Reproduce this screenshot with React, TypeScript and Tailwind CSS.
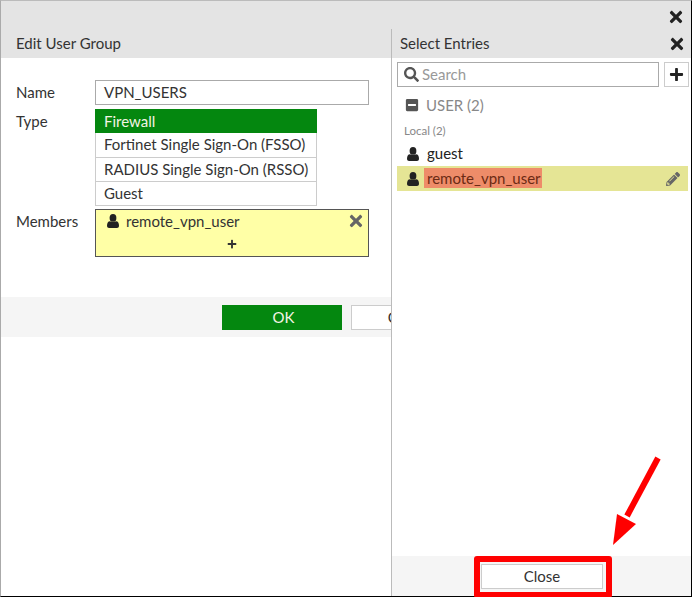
import React from 'react'
import { FaMinusSquare, FaPencilAlt, FaPlus, FaSearch, FaTimes } from 'react-icons/fa'

const typeOptions = ['Fortinet Single Sign-On (FSSO)', 'RADIUS Single Sign-On (RSSO)', 'Guest']

const UserIcon = ({ className }: { className?: string }) => (
  <svg className={className} width="12" height="14" viewBox="0 0 12 14" fill="currentColor">
    <ellipse cx="6" cy="3.9" rx="3.4" ry="3.9" />
    <path d="M0 11.8C0 9.2 1 7.2 3 7.2C4 8.2 8 8.2 9 7.2C11 7.2 12 9.2 12 11.8C12 13.2 11 14 10 14L2 14C1 14 0 13.2 0 11.8Z" />
  </svg>
)

const FormRow = ({ label, children }: { label: string; children: React.ReactNode }) => (
  <div className="flex">
    <div className="w-[79px] pt-[1px] text-[15px] leading-[22px] text-[#333]">{label}</div>
    {children}
  </div>
)

const EditUserGroup = () => {
  return (
    <div className="flex w-[390px] shrink-0 flex-col overflow-hidden">
      <div className="h-[29px] bg-[#e4e4e4] pl-[15px] text-[15px] leading-[28px] text-[#333]">Edit User Group</div>

      <div className="flex h-[239px] flex-col pl-[15px] pt-[22px]">
        <FormRow label="Name">
          <div className="h-[25px] w-[274px] border border-[#aaa] pl-[8px] text-[15px] leading-[23px] text-[#333]">VPN_USERS</div>
        </FormRow>

        <div className="mt-[4px]">
          <FormRow label="Type">
            <div className="flex w-[222px] flex-col">
              <div className="h-[24px] bg-[#04870f] pl-[9px] text-[15px] leading-[24px] text-[#f4f4e4]">Firewall</div>
              <div className="border-x border-b border-[#ccc] text-[15px] text-[#333]">
                {typeOptions.map((option) => (
                  <div key={option} className="h-[24px] border-t border-[#ccc] pl-[8px] leading-[23px] first:border-t-0 whitespace-nowrap">
                    {option}
                  </div>
                ))}
              </div>
            </div>
          </FormRow>
        </div>

        <div className="mt-[3px]">
          <FormRow label="Members">
            <div className="h-[48px] w-[274px] border border-[#555] bg-[#ffffa6] text-[15px] text-[#333]">
              <div className="flex h-[22px] items-center pl-[11px] pr-[5px]">
                <UserIcon className="text-[#222]" />
                <span className="ml-[7px] flex-1 leading-[22px]">remote_vpn_user</span>
                <FaTimes className="h-[18px] w-[14px] text-[#666]" />
              </div>
              <div className="flex h-[24px] items-center justify-center">
                <FaPlus className="h-[10px] w-[10px] text-[#333]" />
              </div>
            </div>
          </FormRow>
        </div>
      </div>

      <div className="flex h-[40px] gap-[9px] bg-[#f5f5f5] pl-[221px] pt-[8px]">
        <div className="h-[25px] w-[120px] shrink-0 bg-[#04870f] pl-[3px] text-center text-[15px] leading-[25px] text-[#f4f4e4]">OK</div>
        <div className="h-[25px] w-[120px] shrink-0 border border-[#ccc] bg-white pr-[2px] text-center text-[15px] leading-[23px] text-[#333]">Cancel</div>
      </div>
    </div>
  )
}

const SelectEntries = () => {
  return (
    <div className="flex flex-1 flex-col border-l border-[#bbb]">
      <div className="flex h-[29px] items-center justify-between bg-[#e4e4e4] pl-[8px] pr-[7px] text-[15px] text-[#333]">
        <span>Select Entries</span>
        <FaTimes className="h-[18px] w-[14px] text-[#222]" />
      </div>

      <div className="flex gap-[5px] pl-[5px] pt-[4px]">
        <div className="flex h-[25px] w-[262px] items-center border border-[#aaa] pl-[6px]">
          <FaSearch className="h-[15px] w-[15px] shrink-0 text-[#555]" />
          <span className="ml-[3px] text-[15px] text-[#999]">Search</span>
        </div>
        <div className="flex h-[25px] w-[25px] items-center justify-center border border-[#ccc]">
          <FaPlus className="h-[15px] w-[15px] text-[#222]" />
        </div>
      </div>

      <div className="mt-[6px] flex h-[24px] items-center pl-[13px] text-[15px] text-[#888]">
        <FaMinusSquare className="h-[14px] w-[14px] text-[#555]" />
        <span className="ml-[7px]">USER (2)</span>
      </div>

      <div className="mt-[5px] h-[18px] pl-[12px] text-[11.5px] leading-[18px] text-[#888]">Local (2)</div>

      <div className="mt-[1px] flex h-[25px] items-center pl-[15px] text-[15px] text-[#222]">
        <UserIcon className="text-[#222]" />
        <span className="ml-[8px]">guest</span>
      </div>

      <div className="ml-[5px] flex h-[25px] w-[291px] items-center bg-[#e5e595] pl-[10px] pr-[8px] text-[15px]">
        <UserIcon className="shrink-0 text-[#222]" />
        <span className="ml-[5px] flex-1">
          <span className="bg-[#ee8c69] py-[1px] pl-[3px] pr-[1px] text-[#6b2a14]">remote_vpn_user</span>
        </span>
        <FaPencilAlt className="h-[14px] w-[14px] text-[#666]" />
      </div>

      <div className="mt-auto flex h-[40px] items-center justify-center bg-[#f5f5f5] pl-[1px]">
        <div className="h-[25px] w-[122px] border border-[#ccc] bg-white text-center text-[15px] leading-[23px] text-[#333]">Close</div>
      </div>
    </div>
  )
}

export default function App() {
  return (
    <div className="relative flex h-[597px] w-[692px] flex-col border-b border-l border-r border-t border-b-black border-l-[#aaa] border-r-black border-t-[#bbb] bg-white font-['Lato','Noto_Sans',sans-serif]">
      <div className="flex h-[28px] shrink-0 items-center justify-end bg-[#e4e4e4] pr-[8px] pt-[3px]">
        <FaTimes className="h-[18px] w-[14px] text-[#222]" />
      </div>
      <div className="flex min-h-0 flex-1">
        <EditUserGroup />
        <SelectEntries />
      </div>

      {/* annotation: red box and arrow */}
      <div className="pointer-events-none absolute left-[473px] top-[555px] h-[42px] w-[138px] rounded-[3px] border-[6px] border-[#ff0000]" />
      <svg className="pointer-events-none absolute left-[597px] top-[449px]" width="70" height="100" viewBox="0 0 70 100">
        <path d="M60 8 L29 66" stroke="#ff0000" strokeWidth="6" fill="none" />
        <path d="M15 95 L19 64 L38 74 Z" fill="#ff0000" />
      </svg>
    </div>
  )
}
